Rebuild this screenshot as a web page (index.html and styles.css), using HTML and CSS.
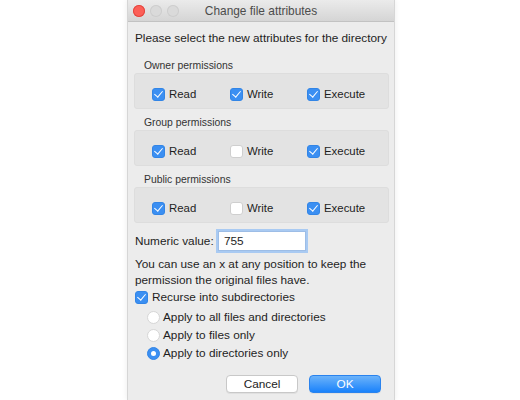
FILE: index.html
```html
<!DOCTYPE html>
<html lang="en">
<head>
<meta charset="UTF-8" />
<title>Change file attributes</title>
<link rel="stylesheet" href="styles.css">
</head>
<body>

<div class="window">
  <div class="titlebar">
    <div class="lights">
      <span class="light red"></span>
      <span class="light"></span>
      <span class="light"></span>
    </div>
    <div class="title">Change file attributes</div>
  </div>

  <div class="content">
    <p class="intro">Please select the new attributes for the directory</p>

    <div class="group">
      <div class="group-label">Owner permissions</div>
      <div class="group-box">
        <label class="check"><span class="box on"></span>Read</label>
        <label class="check"><span class="box on"></span>Write</label>
        <label class="check"><span class="box on"></span>Execute</label>
      </div>
    </div>

    <div class="group">
      <div class="group-label">Group permissions</div>
      <div class="group-box">
        <label class="check"><span class="box on"></span>Read</label>
        <label class="check"><span class="box"></span>Write</label>
        <label class="check"><span class="box on"></span>Execute</label>
      </div>
    </div>

    <div class="group">
      <div class="group-label">Public permissions</div>
      <div class="group-box">
        <label class="check"><span class="box on"></span>Read</label>
        <label class="check"><span class="box"></span>Write</label>
        <label class="check"><span class="box on"></span>Execute</label>
      </div>
    </div>

    <div class="numeric">
      <span>Numeric value:</span>
      <div class="field">755</div>
    </div>

    <p class="help">You can use an x at any position to keep the<br>permission the original files have.</p>

    <label class="check recurse"><span class="box on"></span>Recurse into subdirectories</label>

    <div class="radios">
      <label class="radio"><span class="dot"></span>Apply to all files and directories</label>
      <label class="radio"><span class="dot"></span>Apply to files only</label>
      <label class="radio"><span class="dot on"></span>Apply to directories only</label>
    </div>

    <div class="buttons">
      <button class="btn">Cancel</button>
      <button class="btn primary">OK</button>
    </div>
  </div>
</div>

</body>
</html>
```

FILE: styles.css
```css
body {
  margin: 0;
  background: #fff;
  font-family: 'Liberation Sans', Arial, sans-serif;
  font-size: 11.8px;
  color: #1e1e1e;
  display: flex;
  justify-content: center;
}
.window {
  width: 266px;
  height: 400px;
  margin-left: 2px;
  background: #ececec;
  border-left: 1px solid #d6d6d6;
  border-right: 1px solid #d6d6d6;
  box-shadow: 0 0 6px rgba(0,0,0,0.08);
}
.titlebar {
  height: 22px;
  background: linear-gradient(#ebebeb, #d5d5d5);
  border-bottom: 1px solid #c2c2c2;
  box-sizing: border-box;
  display: flex;
  align-items: center;
  position: relative;
}
.lights {
  display: flex;
  gap: 5px;
  padding-left: 5px;
}
.light {
  width: 12px;
  height: 12px;
  border-radius: 50%;
  background: #dadada;
  box-shadow: inset 0 0 0 1px #cdcdcd;
}
.light.red {
  background: #fc5f57;
  box-shadow: inset 0 0 0 1px #e2463f;
}
.title {
  position: absolute;
  left: 0;
  right: 0;
  text-align: center;
  color: #4c4c4c;
  font-size: 11.9px;
}
.content {
  padding: 0 5px 0 6px;
}
.intro {
  margin: 8px 0 0 1px;
  line-height: 16px;
  white-space: nowrap;
}
.group {
  margin-top: 7px;
}
.group:first-of-type {
  margin-top: 13px;
}
.group-label {
  font-size: 10.4px;
  line-height: 14px;
  color: #333;
  padding-left: 10px;
}
.group-box {
  height: 36px;
  box-sizing: border-box;
  background: #e3e3e3;
  border: 1px solid #dddddd;
  border-radius: 3px;
  padding: 13px 0 0 17px;
  display: grid;
  grid-template-columns: 78px 77px auto;
  align-items: start;
}
.check, .radio {
  display: flex;
  align-items: center;
  line-height: 14px;
}
.group-box .check {
  font-size: 11.4px;
}
.box {
  width: 13px;
  height: 13px;
  box-sizing: border-box;
  border-radius: 3px;
  background: #fff;
  border: 1px solid #cfcfcf;
  margin-right: 4px;
  position: relative;
}
.box.on {
  background: #3b8ff2;
  border-color: #3285e6;
}
.box.on::after {
  content: '';
  position: absolute;
  left: 3px;
  top: 0px;
  width: 4px;
  height: 7px;
  border: solid #fff;
  border-width: 0 1.6px 1.6px 0;
  transform: rotate(40deg);
}
.numeric {
  display: flex;
  align-items: center;
  margin-top: 8px;
  padding-left: 1px;
}
.numeric span {
  width: 83px;
  white-space: nowrap;
}
.field {
  width: 88px;
  height: 20px;
  box-sizing: border-box;
  background: #fff;
  border: 1px solid #9dbde6;
  box-shadow: 0 0 0 2px #a9caf2;
  padding: 2px 5px;
  line-height: 15px;
}
.help {
  margin: 5px 0 0 1px;
  line-height: 16px;
  white-space: nowrap;
}
.recurse {
  height: 18px;
  padding-left: 1px;
}
.recurse .box {
  margin-right: 4px;
}
.radios {
  margin-top: 2px;
  padding-left: 13px;
}
.radio {
  height: 18px;
}
.dot {
  width: 13px;
  height: 13px;
  box-sizing: border-box;
  border-radius: 50%;
  background: #fff;
  border: 1px solid #d6d6d6;
  margin-right: 3px;
  position: relative;
}
.dot.on {
  background: #3b8ff2;
  border-color: #3285e6;
}
.dot.on::after {
  content: '';
  position: absolute;
  left: 3px;
  top: 3px;
  width: 5px;
  height: 5px;
  border-radius: 50%;
  background: #fff;
}
.buttons {
  display: flex;
  justify-content: flex-end;
  gap: 11px;
  margin-top: 13px;
  padding-right: 8px;
}
.btn {
  width: 72px;
  height: 18px;
  font-family: inherit;
  font-size: 11.8px;
  line-height: 16px;
  padding: 0;
  border-radius: 4px;
  border: 1px solid #c8c8c8;
  background: #fff;
  color: #222;
  box-shadow: 0 1px 0 rgba(0,0,0,0.05);
}
.btn.primary {
  background: linear-gradient(#6cb3fa, #1a82fb);
  border-color: #2a83ee;
  color: #fff;
}
```
